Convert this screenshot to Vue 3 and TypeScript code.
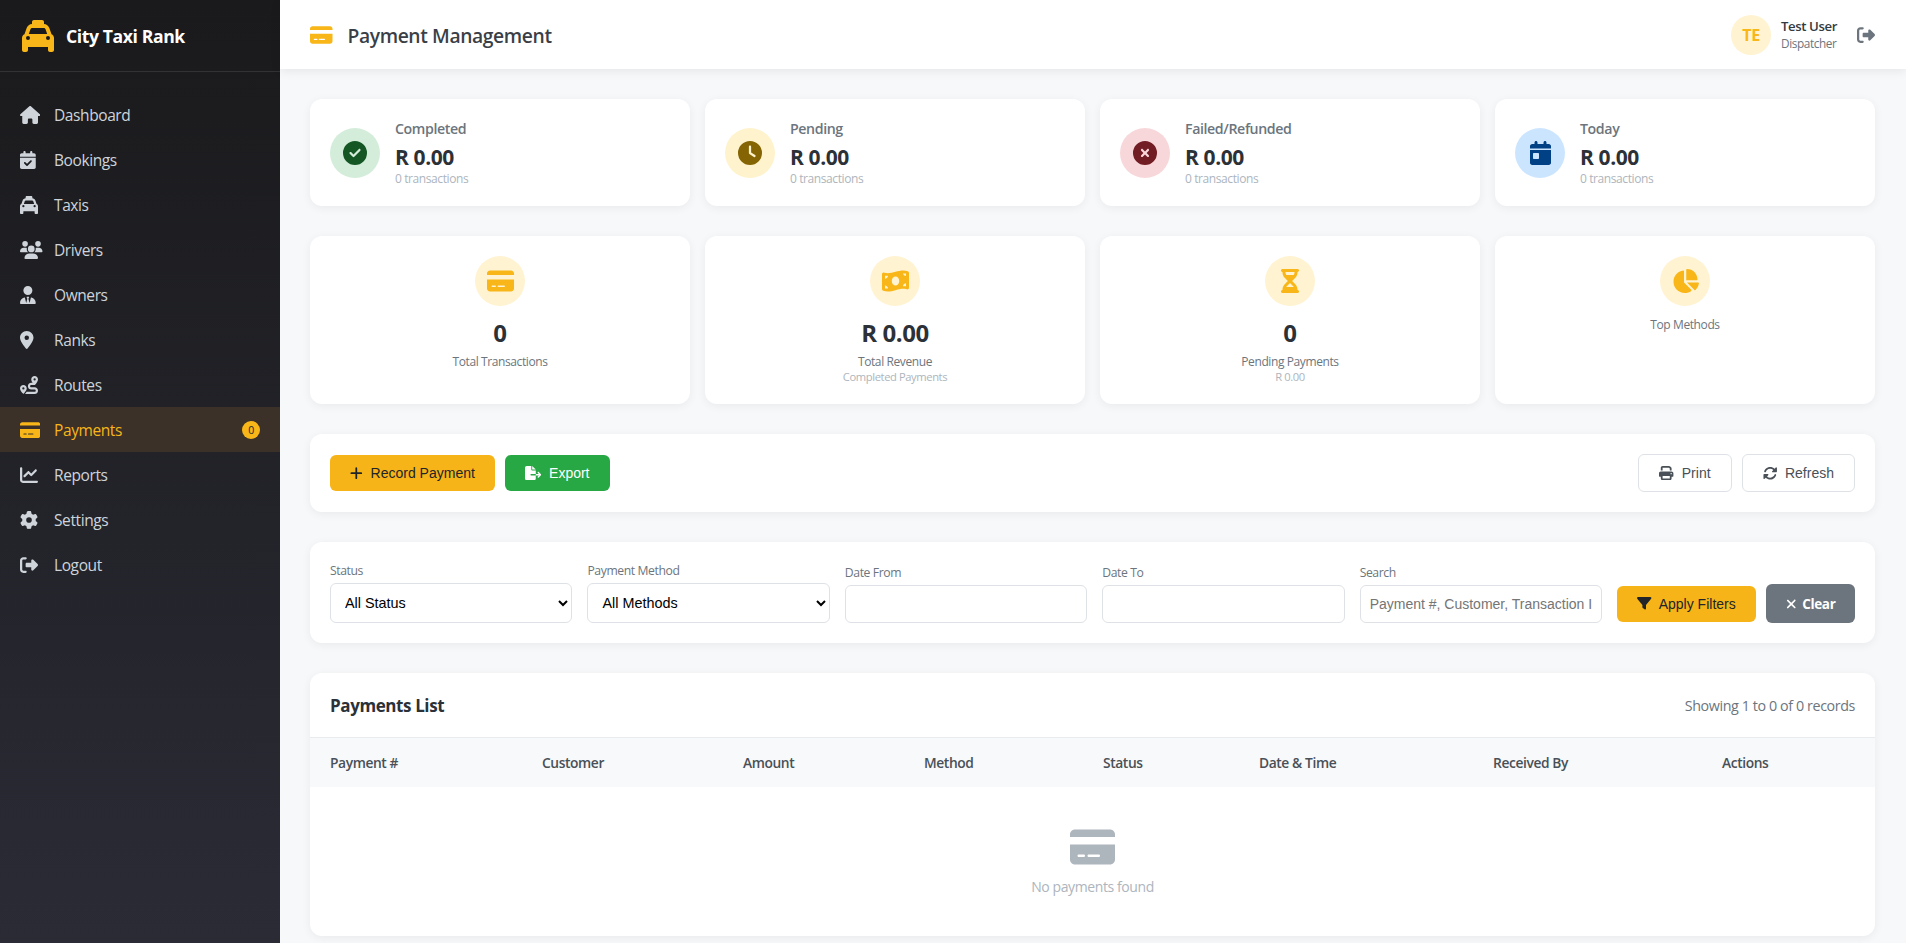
<script setup lang="ts">
interface Glyph { vb: string; d: string }
const card: Glyph = { vb: '0 0 576 512', d: 'M64 32C28.7 32 0 60.7 0 96v32H576V96c0-35.3-28.7-64-64-64H64zM576 224H0V416c0 35.3 28.7 64 64 64H512c35.3 0 64-28.7 64-64V224zM112 352h64c8.8 0 16 7.2 16 16s-7.2 16-16 16H112c-8.8 0-16-7.2-16-16s7.2-16 16-16zm112 16c0-8.8 7.2-16 16-16H368c8.8 0 16 7.2 16 16s-7.2 16-16 16H240c-8.8 0-16-7.2-16-16z' }
const taxi: Glyph = { vb: '0 0 512 512', d: 'M192 0c-17.7 0-32 14.3-32 32V64c0 .1 0 .1 0 .2c-38.6 2.2-72.3 27.3-85.2 64.1L39.6 228.8C16.4 238.4 0 261.3 0 288V432v48c0 17.7 14.3 32 32 32H64c17.7 0 32-14.3 32-32V432H416v48c0 17.7 14.3 32 32 32h32c17.7 0 32-14.3 32-32V432 288c0-26.7-16.4-49.6-39.6-59.2L437.2 128.3c-12.9-36.8-46.6-61.9-85.2-64.1c0-.1 0-.1 0-.2V32c0-17.7-14.3-32-32-32H192zM165.4 128H346.6c13.6 0 25.7 8.6 30.2 21.4L402.9 224H109.1l26.1-74.6c4.5-12.8 16.6-21.4 30.2-21.4zM64 288a32 32 0 1 1 64 0 32 32 0 1 1 -64 0zm352-32a32 32 0 1 1 0 64 32 32 0 1 1 0-64z' }
const signOut: Glyph = { vb: '0 0 512 512', d: 'M377.9 105.9L500.7 228.7c7.2 7.2 11.3 17.1 11.3 27.3s-4.1 20.1-11.3 27.3L377.9 406.1c-6.4 6.4-15 9.9-24 9.9c-18.7 0-33.9-15.2-33.9-33.9l0-62.1-128 0c-17.7 0-32-14.3-32-32l0-64c0-17.7 14.3-32 32-32l128 0 0-62.1c0-18.7 15.2-33.9 33.9-33.9c9 0 17.6 3.6 24 9.9zM160 96L96 96c-17.7 0-32 14.3-32 32l0 256c0 17.7 14.3 32 32 32l64 0c17.7 0 32 14.3 32 32s-14.3 32-32 32l-64 0c-53 0-96-43-96-96L0 128C0 75 43 32 96 32l64 0c17.7 0 32 14.3 32 32s-14.3 32-32 32z' }
const plus: Glyph = { vb: '0 0 448 512', d: 'M256 80c0-17.7-14.3-32-32-32s-32 14.3-32 32V224H48c-17.7 0-32 14.3-32 32s14.3 32 32 32H192V432c0 17.7 14.3 32 32 32s32-14.3 32-32V288H400c17.7 0 32-14.3 32-32s-14.3-32-32-32H256V80z' }
const fileExport: Glyph = { vb: '0 0 576 512', d: 'M0 64C0 28.7 28.7 0 64 0H224V128c0 17.7 14.3 32 32 32H384V288H216c-13.3 0-24 10.7-24 24s10.7 24 24 24H384V448c0 35.3-28.7 64-64 64H64c-35.3 0-64-28.7-64-64V64zM384 336V288H494.1l-39-39c-9.4-9.4-9.4-24.6 0-33.9s24.6-9.4 33.9 0l80 80c9.4 9.4 9.4 24.6 0 33.9l-80 80c-9.4 9.4-24.6 9.4-33.9 0s-9.4-24.6 0-33.9l39-39H384zm0-208H256V0L384 128z' }
const printer: Glyph = { vb: '0 0 512 512', d: 'M128 0C92.7 0 64 28.7 64 64v96h64V64H354.7L384 93.3V160h64V93.3c0-17-6.7-33.3-18.7-45.3L400 18.7C388 6.7 371.7 0 354.7 0H128zM384 352v32 64H128V384 368 352H384zm64 32h32c17.7 0 32-14.3 32-32V256c0-35.3-28.7-64-64-64H64c-35.3 0-64 28.7-64 64v96c0 17.7 14.3 32 32 32H64v64c0 35.3 28.7 64 64 64H384c35.3 0 64-28.7 64-64V384zM432 248a24 24 0 1 1 0 48 24 24 0 1 1 0-48z' }
const refresh: Glyph = { vb: '0 0 512 512', d: 'M142.9 142.9c-17.5 17.5-30.1 38-37.8 59.8c-5.9 16.7-24.2 25.4-40.8 19.5s-25.4-24.2-19.5-40.8C55.6 150.7 73.2 122 97.6 97.6c87.2-87.2 228.3-87.5 315.8-1L455 55c6.9-6.9 17.2-8.9 26.2-5.2s14.8 12.5 14.8 22.2l0 128c0 13.3-10.7 24-24 24l-8.4 0c0 0 0 0 0 0L344 224c-9.7 0-18.5-5.8-22.2-14.8s-1.7-19.3 5.2-26.2l41.1-41.1c-62.6-61.5-163.1-61.2-225.3 1zM16 312c0-13.3 10.7-24 24-24l7.6 0 .7 0L168 288c9.7 0 18.5 5.8 22.2 14.8s1.7 19.3-5.2 26.2l-41.1 41.1c62.6 61.5 163.1 61.2 225.3-1c17.5-17.5 30.1-38 37.8-59.8c5.9-16.7 24.2-25.4 40.8-19.5s25.4 24.2 19.5 40.8c-10.8 30.6-28.4 59.3-52.9 83.8c-87.2 87.2-228.3 87.5-315.8 1L57 457c-6.9 6.9-17.2 8.9-26.2 5.2S16 449.7 16 440l0-119.6 0-.7 0-7.6z' }
const filter: Glyph = { vb: '0 0 512 512', d: 'M3.9 54.9C10.5 40.9 24.5 32 40 32H472c15.5 0 29.5 8.9 36.1 22.9s4.6 30.5-5.2 42.5L320 320.9V448c0 12.1-6.8 23.2-17.7 28.6s-23.8 4.3-33.5-3l-64-48c-8.1-6-12.8-15.5-12.8-25.6V320.9L9 97.3C-.7 85.4-2.8 68.8 3.9 54.9z' }
const xmark: Glyph = { vb: '0 0 384 512', d: 'M342.6 150.6c12.5-12.5 12.5-32.8 0-45.3s-32.8-12.5-45.3 0L192 210.7 86.6 105.4c-12.5-12.5-32.8-12.5-45.3 0s-12.5 32.8 0 45.3L146.7 256 41.4 361.4c-12.5 12.5-12.5 32.8 0 45.3s32.8 12.5 45.3 0L192 301.3 297.4 406.6c12.5 12.5 32.8 12.5 45.3 0s12.5-32.8 0-45.3L237.3 256 342.6 150.6z' }

const nav: { label: string; icon: Glyph; active?: boolean; badge?: string }[] = [
  { label: 'Dashboard', icon: { vb: '0 0 576 512', d: 'M575.8 255.5c0 18-15 32.1-32 32.1h-32l.7 160.2c0 2.7-.2 5.4-.5 8.1V472c0 22.1-17.9 40-40 40H456c-1.1 0-2.2 0-3.3-.1c-1.4 .1-2.8 .1-4.2 .1H416 392c-22.1 0-40-17.9-40-40V448 384c0-17.7-14.3-32-32-32H256c-17.7 0-32 14.3-32 32v64 24c0 22.1-17.9 40-40 40H160 128.1c-1.5 0-3-.1-4.5-.2c-1.2 .1-2.4 .2-3.6 .2H104c-22.1 0-40-17.9-40-40V360c0-.9 0-1.9 .1-2.8V287.6H32c-18 0-32-14-32-32.1c0-9 3-17 10-24L266.4 8c7-7 15-8 22-8s15 2 21 7L564.8 231.5c8 7 12 15 11 24z' } },
  { label: 'Bookings', icon: { vb: '0 0 448 512', d: 'M128 0c17.7 0 32 14.3 32 32V64H288V32c0-17.7 14.3-32 32-32s32 14.3 32 32V64h48c26.5 0 48 21.5 48 48v48H0V112C0 85.5 21.5 64 48 64H96V32c0-17.7 14.3-32 32-32zM0 192H448V464c0 26.5-21.5 48-48 48H48c-26.5 0-48-21.5-48-48V192zM329 305c9.4-9.4 9.4-24.6 0-33.9s-24.6-9.4-33.9 0l-95 95-47-47c-9.4-9.4-24.6-9.4-33.9 0s-9.4 24.6 0 33.9l64 64c9.4 9.4 24.6 9.4 33.9 0L329 305z' } },
  { label: 'Taxis', icon: taxi },
  { label: 'Drivers', icon: { vb: '0 0 640 512', d: 'M144 0a80 80 0 1 1 0 160A80 80 0 1 1 144 0zM512 0a80 80 0 1 1 0 160A80 80 0 1 1 512 0zM0 298.7C0 239.8 47.8 192 106.7 192h42.7c15.9 0 31 3.5 44.6 9.7c-1.3 7.2-1.9 14.7-1.9 22.3c0 38.2 16.8 72.5 43.3 96c-.2 0-.4 0-.7 0H21.3C9.6 320 0 310.4 0 298.7zM405.3 320c-.2 0-.4 0-.7 0c26.6-23.5 43.3-57.8 43.3-96c0-7.6-.7-15-1.9-22.3c13.6-6.3 28.7-9.7 44.6-9.7h42.7C592.2 192 640 239.8 640 298.7c0 11.8-9.6 21.3-21.3 21.3H405.3zM224 224a96 96 0 1 1 192 0 96 96 0 1 1 -192 0zM128 485.3C128 411.7 187.7 352 261.3 352H378.7C452.3 352 512 411.7 512 485.3c0 14.7-11.9 26.7-26.7 26.7H154.7c-14.7 0-26.7-11.9-26.7-26.7z' } },
  { label: 'Owners', icon: { vb: '0 0 448 512', d: 'M96 128a128 128 0 1 0 256 0A128 128 0 1 0 96 128zm94.5 200.2l18.6 31L175.8 483.1l-36-146.9c-2-8.1-9.8-13.4-17.9-11.3C51.9 342.4 0 405.8 0 481.3c0 17 13.8 30.7 30.7 30.7H162.5c0 0 0 0 .1 0H168 280h5.5c0 0 0 0 .1 0H417.3c17 0 30.7-13.8 30.7-30.7c0-75.5-51.9-138.9-121.9-156.4c-8.1-2-15.9 3.3-17.9 11.3l-36 146.9L238.9 359.2l18.6-31c6.4-10.7-1.3-24.2-13.7-24.2H224 204.3c-12.4 0-20.1 13.6-13.7 24.2z' } },
  { label: 'Ranks', icon: { vb: '0 0 384 512', d: 'M215.7 499.2C267 435 384 279.4 384 192C384 86 298 0 192 0S0 86 0 192c0 87.4 117 243 168.3 307.2c12.3 15.3 35.1 15.3 47.4 0zM192 128a64 64 0 1 1 0 128 64 64 0 1 1 0-128z' } },
  { label: 'Routes', icon: { vb: '0 0 512 512', d: 'M512 96c0 50.2-59.1 125.1-84.6 155c-3.8 4.4-9.4 6.1-14.5 5H320c-17.7 0-32 14.3-32 32s14.3 32 32 32h96c53 0 96 43 96 96s-43 96-96 96H139.6c8.7-9.9 19.3-22.6 30-36.8c6.3-8.4 12.8-17.6 19-27.2H416c17.7 0 32-14.3 32-32s-14.3-32-32-32H320c-53 0-96-43-96-96s43-96 96-96h39.8c-21-31.5-39.8-67.7-39.8-96c0-53 43-96 96-96s96 43 96 96zM117.1 489.1c-3.8 4.3-7.2 8.1-10.1 11.3l-1.8 2-.2-.2c-6 4.6-14.6 4-20-1.8C59.8 473 0 402.5 0 352c0-53 43-96 96-96s96 43 96 96c0 30-21.1 67-43.5 97.9c-10.7 14.7-21.7 28-30.8 38.5l-.6 .7zM128 352a32 32 0 1 0 -64 0 32 32 0 1 0 64 0zM416 128a32 32 0 1 0 0-64 32 32 0 1 0 0 64z' } },
  { label: 'Payments', icon: card, active: true, badge: '0' },
  { label: 'Reports', icon: { vb: '0 0 512 512', d: 'M64 64c0-17.7-14.3-32-32-32S0 46.3 0 64V400c0 44.2 35.8 80 80 80H480c17.7 0 32-14.3 32-32s-14.3-32-32-32H80c-8.8 0-16-7.2-16-16V64zm406.6 86.6c12.5-12.5 12.5-32.8 0-45.3s-32.8-12.5-45.3 0L320 210.7l-57.4-57.4c-12.5-12.5-32.8-12.5-45.3 0l-112 112c-12.5 12.5-12.5 32.8 0 45.3s32.8 12.5 45.3 0L240 221.3l57.4 57.4c12.5 12.5 32.8 12.5 45.3 0l128-128z' } },
  { label: 'Settings', icon: { vb: '0 0 512 512', d: 'M495.9 166.6c3.2 8.7 .5 18.4-6.4 24.6l-43.3 39.4c1.1 8.3 1.7 16.8 1.7 25.4s-.6 17.1-1.7 25.4l43.3 39.4c6.9 6.2 9.6 15.9 6.4 24.6c-4.4 11.9-9.7 23.3-15.8 34.3l-4.7 8.1c-6.6 11-14 21.4-22.1 31.2c-5.9 7.2-15.7 9.6-24.5 6.8l-55.7-17.7c-13.4 10.3-28.2 18.9-44 25.4l-12.5 57.1c-2 9.1-9 16.3-18.2 17.8c-13.8 2.3-28 3.5-42.5 3.5s-28.7-1.2-42.5-3.5c-9.2-1.5-16.2-8.7-18.2-17.8l-12.5-57.1c-15.8-6.5-30.6-15.1-44-25.4L83.1 425.9c-8.8 2.8-18.6 .3-24.5-6.8c-8.1-9.8-15.5-20.2-22.1-31.2l-4.7-8.1c-6.1-11-11.4-22.4-15.8-34.3c-3.2-8.7-.5-18.4 6.4-24.6l43.3-39.4C64.6 273.1 64 264.6 64 256s.6-17.1 1.7-25.4L22.4 191.2c-6.9-6.2-9.6-15.9-6.4-24.6c4.4-11.9 9.7-23.3 15.8-34.3l4.7-8.1c6.6-11 14-21.4 22.1-31.2c5.9-7.2 15.7-9.6 24.5-6.8l55.7 17.7c13.4-10.3 28.2-18.9 44-25.4l12.5-57.1c2-9.1 9-16.3 18.2-17.8C227.3 1.2 241.5 0 256 0s28.7 1.2 42.5 3.5c9.2 1.5 16.2 8.7 18.2 17.8l12.5 57.1c15.8 6.5 30.6 15.1 44 25.4l55.7-17.7c8.8-2.8 18.6-.3 24.5 6.8c8.1 9.8 15.5 20.2 22.1 31.2l4.7 8.1c6.1 11 11.4 22.4 15.8 34.3zM256 336a80 80 0 1 0 0-160 80 80 0 1 0 0 160z' } },
  { label: 'Logout', icon: signOut }
]

const stats: { label: string; tone: string; icon: Glyph }[] = [
  { label: 'Completed', tone: 'green', icon: { vb: '0 0 512 512', d: 'M256 512A256 256 0 1 0 256 0a256 256 0 1 0 0 512zM369 209L241 337c-9.4 9.4-24.6 9.4-33.9 0l-64-64c-9.4-9.4-9.4-24.6 0-33.9s24.6-9.4 33.9 0l47 47L335 175c9.4-9.4 24.6-9.4 33.9 0s9.4 24.6 0 33.9z' } },
  { label: 'Pending', tone: 'amber', icon: { vb: '0 0 512 512', d: 'M256 0a256 256 0 1 1 0 512A256 256 0 1 1 256 0zM232 120V256c0 8 4 15.5 10.7 20l96 64c11 7.4 25.9 4.4 33.3-6.7s4.4-25.9-6.7-33.3L280 243.2V120c0-13.3-10.7-24-24-24s-24 10.7-24 24z' } },
  { label: 'Failed/Refunded', tone: 'red', icon: { vb: '0 0 512 512', d: 'M256 512A256 256 0 1 0 256 0a256 256 0 1 0 0 512zM175 175c9.4-9.4 24.6-9.4 33.9 0l47 47 47-47c9.4-9.4 24.6-9.4 33.9 0s9.4 24.6 0 33.9l-47 47 47 47c9.4 9.4 9.4 24.6 0 33.9s-24.6 9.4-33.9 0l-47-47-47 47c-9.4 9.4-24.6 9.4-33.9 0s-9.4-24.6 0-33.9l47-47-47-47c-9.4-9.4-9.4-24.6 0-33.9z' } },
  { label: 'Today', tone: 'blue', icon: { vb: '0 0 448 512', d: 'M128 0c17.7 0 32 14.3 32 32V64H288V32c0-17.7 14.3-32 32-32s32 14.3 32 32V64h48c26.5 0 48 21.5 48 48v48H0V112C0 85.5 21.5 64 48 64H96V32c0-17.7 14.3-32 32-32zM0 192H448V464c0 26.5-21.5 48-48 48H48c-26.5 0-48-21.5-48-48V192zm80 64c-8.8 0-16 7.2-16 16v96c0 8.8 7.2 16 16 16h96c8.8 0 16-7.2 16-16V272c0-8.8-7.2-16-16-16H80z' } }
]

const summary: { value?: string; label: string; sub?: string; icon: Glyph }[] = [
  { value: '0', label: 'Total Transactions', icon: card },
  { value: 'R 0.00', label: 'Total Revenue', sub: 'Completed Payments', icon: { vb: '0 0 576 512', d: 'M0 112.5V422.3c0 18 10.1 35 27 41.3c87 32.5 174 10.3 261-11.9c79.8-20.3 159.6-40.7 239.3-18.4C550.4 440.1 576 424.7 576 400.7V89.7c0-18-10.1-35-27-41.3C462 15.9 375 38.1 288 60.3C208.2 80.6 128.4 100.9 48.7 78.6C25.6 72.1 0 87.5 0 111.5zM288 352c-44.2 0-80-43-80-96s35.8-96 80-96s80 43 80 96s-35.8 96-80 96zM64 352c35.3 0 64 28.7 64 64H64V352zm64-208c0 35.3-28.7 64-64 64V144h64zM512 304v64H448c0-35.3 28.7-64 64-64zM448 96h64v54.4c-33.6-3.4-60.2-29.7-64-54.4z' } },
  { value: '0', label: 'Pending Payments', sub: 'R 0.00', icon: { vb: '0 0 384 512', d: 'M32 0C14.3 0 0 14.3 0 32S14.3 64 32 64V75c0 42.4 16.9 83.1 46.9 113.1L146.7 256 78.9 323.9C48.9 353.9 32 394.6 32 437v11c-17.7 0-32 14.3-32 32s14.3 32 32 32H64 320h32c17.7 0 32-14.3 32-32s-14.3-32-32-32V437c0-42.4-16.9-83.1-46.9-113.1L237.3 256l67.9-67.9c30-30 46.9-70.7 46.9-113.1V64c17.7 0 32-14.3 32-32s-14.3-32-32-32H320 64 32zM96 75V64H288V75c0 19-5.6 37.4-16 53H112c-10.3-15.6-16-34-16-53zm16 309c3.5-5.3 7.6-10.3 12.1-14.9L192 301.3l67.9 67.9c4.6 4.6 8.6 9.6 12.1 14.9H112z' } },
  { label: 'Top Methods', icon: { vb: '0 0 576 512', d: 'M304 240V16.6c0-9 7-16.6 16-16.6C443.7 0 544 100.3 544 224c0 9-7.6 16-16.6 16H304zM32 272C32 150.7 122.1 50.3 239 34.3c9.2-1.3 17 6.1 17 15.4V288L412.5 444.5c6.7 6.7 6.2 17.7-1.5 23.1C371.8 495.6 323.8 512 272 512C139.5 512 32 404.6 32 272zm526.4 16c9.3 0 16.6 7.8 15.4 17c-7.7 55.9-34.6 105.6-73.9 142.3c-6 5.6-15.4 5.2-21.2-.7L320 288H558.4z' } }
]

const columns = ['Payment #', 'Customer', 'Amount', 'Method', 'Status', 'Date & Time', 'Received By', 'Actions']
</script>

<template>
  <div class="shell">
    <aside class="sidebar">
      <div class="brand">
        <svg class="logo" :viewBox="taxi.vb"><path :d="taxi.d" /></svg>
        <span class="brand-name">City Taxi Rank</span>
      </div>
      <nav class="menu">
        <a v-for="item in nav" :key="item.label" class="menu-item" :class="{ active: item.active }">
          <span class="menu-icon"><svg :viewBox="item.icon.vb"><path :d="item.icon.d" /></svg></span>
          <span class="menu-label">{{ item.label }}</span>
          <span v-if="item.badge" class="badge">{{ item.badge }}</span>
        </a>
      </nav>
    </aside>

    <div class="main">
      <header class="topbar">
        <div class="title">
          <svg class="title-icon" :viewBox="card.vb"><path :d="card.d" /></svg>
          <h1>Payment Management</h1>
        </div>
        <div class="user">
          <div class="avatar">TE</div>
          <div class="user-text">
            <div class="user-name">Test User</div>
            <div class="user-role">Dispatcher</div>
          </div>
          <svg class="user-out" :viewBox="signOut.vb"><path :d="signOut.d" /></svg>
        </div>
      </header>

      <main class="content">
        <section class="grid stats">
          <div v-for="s in stats" :key="s.label" class="panel stat">
            <div class="stat-icon" :class="s.tone"><svg :viewBox="s.icon.vb"><path :d="s.icon.d" /></svg></div>
            <div class="stat-text">
              <div class="stat-label">{{ s.label }}</div>
              <div class="stat-value">R 0.00</div>
              <div class="stat-sub">0 transactions</div>
            </div>
          </div>
        </section>

        <section class="grid summary">
          <div v-for="s in summary" :key="s.label" class="panel sum">
            <div class="sum-icon"><svg :viewBox="s.icon.vb"><path :d="s.icon.d" /></svg></div>
            <div v-if="s.value" class="sum-value">{{ s.value }}</div>
            <div class="sum-label">{{ s.label }}</div>
            <div v-if="s.sub" class="sum-sub">{{ s.sub }}</div>
          </div>
        </section>

        <section class="panel toolbar">
          <div class="group">
            <button class="btn primary">
              <svg :viewBox="plus.vb"><path :d="plus.d" /></svg>Record Payment
            </button>
            <button class="btn success">
              <svg :viewBox="fileExport.vb"><path :d="fileExport.d" /></svg>Export
            </button>
          </div>
          <div class="group">
            <button class="btn outline">
              <svg :viewBox="printer.vb"><path :d="printer.d" /></svg>Print
            </button>
            <button class="btn outline">
              <svg :viewBox="refresh.vb"><path :d="refresh.d" /></svg>Refresh
            </button>
          </div>
        </section>

        <section class="panel filters">
          <label class="field">
            <span>Status</span>
            <select class="control select"><option>All Status</option></select>
          </label>
          <label class="field">
            <span>Payment Method</span>
            <select class="control select"><option>All Methods</option></select>
          </label>
          <label class="field">
            <span>Date From</span>
            <input class="control" type="text" />
          </label>
          <label class="field">
            <span>Date To</span>
            <input class="control" type="text" />
          </label>
          <label class="field">
            <span>Search</span>
            <input class="control" type="text" placeholder="Payment #, Customer, Transaction ID" />
          </label>
          <div class="filter-actions">
            <button class="btn primary">
              <svg :viewBox="filter.vb"><path :d="filter.d" /></svg>Apply Filters
            </button>
            <button class="btn clear">
              <svg :viewBox="xmark.vb"><path :d="xmark.d" /></svg>Clear
            </button>
          </div>
        </section>

        <section class="panel list">
          <div class="list-head">
            <h2>Payments List</h2>
            <span class="list-count">Showing 1 to 0 of 0 records</span>
          </div>
          <table>
            <thead>
              <tr><th v-for="c in columns" :key="c">{{ c }}</th></tr>
            </thead>
            <tbody>
              <tr>
                <td class="empty" :colspan="columns.length">
                  <svg :viewBox="card.vb"><path :d="card.d" /></svg>
                  <p>No payments found</p>
                </td>
              </tr>
            </tbody>
          </table>
        </section>
      </main>
    </div>
  </div>
</template>

<style>
html, body { margin: 0; padding: 0; }
</style>

<style scoped>
* { box-sizing: border-box; }
svg { fill: currentColor; display: block; flex: none; }
.shell {
  display: flex;
  height: 943px;
  overflow: hidden;
  background: #f7f8fa;
  font-family: "Open Sans", "Noto Sans", sans-serif;
  letter-spacing: -0.025em;
  color: #212529;
}
.sidebar {
  width: 280px;
  flex: none;
  background: linear-gradient(180deg, #1a1a1c 0%, #2a2b35 100%);
  color: #ced4da;
}
.brand {
  height: 72px;
  display: flex;
  align-items: center;
  gap: 12px;
  padding: 0 22px;
  border-bottom: 1px solid rgba(255, 255, 255, 0.1);
}
.logo { width: 32px; height: 32px; color: #f8b619; }
.brand-name { font-size: 17.6px; font-weight: 700; color: #fff; }
.menu { padding-top: 20px; }
.menu-item {
  height: 45px;
  display: flex;
  align-items: center;
  padding: 0 20px;
  font-size: 15.5px;
  color: #ced4da;
}
.menu-icon { width: 34px; flex: none; }
.menu-icon svg { height: 18px; width: auto; }
.menu-label { flex: 1; }
.menu-item.active { background: #3b3128; color: #f8b619; }
.badge {
  width: 18px;
  height: 18px;
  border-radius: 50%;
  background: #f8b619;
  color: #212529;
  font-size: 10.5px;
  display: flex;
  align-items: center;
  justify-content: center;
}
.main { flex: 1; min-width: 0; display: flex; flex-direction: column; }
.topbar {
  height: 69px;
  flex: none;
  background: #fff;
  box-shadow: 0 2px 10px rgba(0, 0, 0, 0.08);
  display: flex;
  align-items: center;
  justify-content: space-between;
  padding: 0 31px 0 30px;
  position: relative;
}
.title { display: flex; align-items: center; gap: 15px; }
.title-icon { height: 20px; width: auto; color: #f8b619; }
h1 { margin: 2px 0 0; font-size: 19.3px; font-weight: 600; color: #3a3f47; }
.user { display: flex; align-items: center; }
.avatar {
  width: 40px;
  height: 40px;
  border-radius: 50%;
  background: #fff3d1;
  color: #f8b619;
  font-weight: 700;
  font-size: 16px;
  display: flex;
  align-items: center;
  justify-content: center;
  margin-right: 10px;
}
.user-text { margin-right: 20px; }
.user-name { font-size: 13.2px; font-weight: 600; color: #343a40; line-height: 18px; }
.user-role { font-size: 11.8px; color: #6c757d; line-height: 17px; }
.user-out { width: 18px; height: 18px; color: #6c757d; }
.content { flex: 1; padding: 30px 31px 30px 30px; min-height: 0; }
.panel { background: #fff; border-radius: 12px; box-shadow: 0 2px 10px rgba(0, 0, 0, 0.06); }
.grid { display: grid; grid-template-columns: repeat(4, 1fr); gap: 15px; margin-bottom: 30px; }
.stat { height: 107px; padding: 20px; display: flex; align-items: center; gap: 15px; }
.stat-icon {
  width: 50px;
  height: 50px;
  flex: none;
  border-radius: 50%;
  display: flex;
  align-items: center;
  justify-content: center;
}
.stat-icon svg { height: 24px; width: auto; }
.green { background: #d4edda; color: #155724; }
.amber { background: #fff3cd; color: #856404; }
.red { background: #f8d7da; color: #721c24; }
.blue { background: #cce5ff; color: #004085; }
.stat-text { padding-top: 2px; }
.stat-label { font-size: 14.2px; font-weight: 600; color: #6c757d; line-height: 18px; margin-bottom: 5px; }
.stat-value { font-size: 21px; font-weight: 700; color: #2c3138; line-height: 28px; }
.stat-sub { font-size: 12px; color: #adb5bd; line-height: 16px; }
.sum { height: 168px; padding: 20px; display: flex; flex-direction: column; align-items: center; }
.sum > * { flex: none; }
.sum-icon {
  width: 50px;
  height: 50px;
  border-radius: 50%;
  background: #fff3d1;
  color: #f8b619;
  display: flex;
  align-items: center;
  justify-content: center;
  margin-bottom: 10px;
}
.sum-icon svg { height: 24px; width: auto; }
.sum-value { font-size: 24px; font-weight: 700; color: #2c3138; line-height: 33px; margin-bottom: 4px; }
.sum-label { font-size: 12px; color: #6c757d; line-height: 17px; }
.sum-sub { font-size: 11.2px; color: #adb5bd; line-height: 13px; }
.toolbar { height: 78px; padding: 20px; display: flex; align-items: center; justify-content: space-between; margin-bottom: 30px; }
.group { display: flex; align-items: center; gap: 10px; }
.btn {
  display: inline-flex;
  align-items: center;
  justify-content: center;
  gap: 8px;
  padding: 10px 20px;
  border: 0;
  border-radius: 6px;
  font-family: "Liberation Sans", Arial, sans-serif;
  font-size: 14px;
  letter-spacing: 0;
  line-height: 16px;
  white-space: nowrap;
}
.btn svg { height: 14.4px; width: auto; }
.primary { background: #f6b419; color: #212529; }
.success { background: #28a745; color: #fff; }
.outline { background: #fff; color: #495057; border: 1px solid #dee2e6; padding: 10px 20px; }
.clear { background: #6c757d; color: #fff; font-family: "Open Sans", sans-serif; font-weight: 700; font-size: 13.5px; height: 39px; gap: 6px; letter-spacing: -0.025em; padding: 0 18px; }
.clear svg { height: 14px; }
.filters { height: 101px; padding: 20px; display: flex; align-items: flex-end; gap: 15px; margin-bottom: 30px; }
.field { flex: 1; min-width: 0; display: flex; flex-direction: column; gap: 4px; }
.field span { font-size: 12.2px; color: #6c757d; line-height: 17px; }
.control {
  width: 100%;
  height: 38px;
  border: 1px solid #dee2e6;
  border-radius: 6px;
  background: #fff;
  font-family: "Liberation Sans", Arial, sans-serif;
  font-size: 14px;
  letter-spacing: 0;
  padding: 0 9px;
  color: #000;
}
.control::placeholder { color: #757575; }
.select { height: 40px; font-size: 14.4px; padding: 0 8px 0 10px; }
.filter-actions { display: flex; align-items: center; gap: 10px; flex: none; }
.filter-actions .primary { width: 139px; height: 36px; padding: 0; gap: 7px; }
.filter-actions .clear { width: 89px; }
.list { height: 263px; overflow: hidden; }
.list-head { height: 65px; padding: 0 20px; display: flex; align-items: center; justify-content: space-between; border-bottom: 1px solid #e9ecef; }
h2 { margin: 0; font-size: 17px; font-weight: 700; color: #2c3138; }
.list-count { font-size: 14.3px; color: #6c757d; }
table { width: 100%; border-collapse: collapse; table-layout: fixed; }
th {
  height: 49px;
  padding: 0 20px;
  background: #f8f9fa;
  text-align: left;
  font-size: 13.8px;
  font-weight: 600;
  color: #495057;
}
th:nth-child(1) { width: 212px; }
th:nth-child(2) { width: 201px; }
th:nth-child(3) { width: 181px; }
th:nth-child(4) { width: 179px; }
th:nth-child(5) { width: 156px; }
th:nth-child(6) { width: 234px; }
th:nth-child(7) { width: 229px; }
.empty { padding: 40px 20px 0; color: #adb5bd; font-size: 14px; text-align: center; }
.empty svg { height: 40px; width: auto; margin: 0 auto 10px; color: #adb5bd; }
.empty p { margin: 0; line-height: 20px; }
</style>
